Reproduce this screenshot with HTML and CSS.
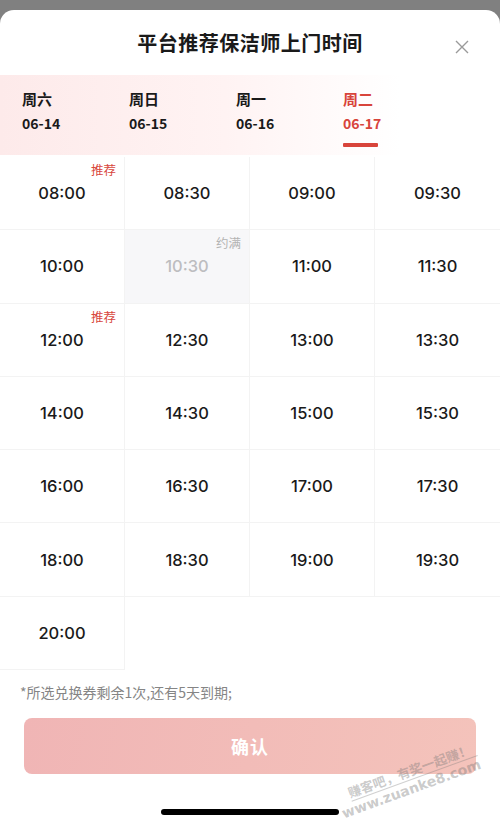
FILE: index.html
```html
<!DOCTYPE html>
<html>
  <head>
    <meta charset="utf-8" />
    <meta name="viewport" content="width=device-width, initial-scale=1" />
    <title>选择上门时间</title>
    <link rel="stylesheet" href="styles.css">
  </head>
  <body>
    <div class="sheet">
      <header class="sheet-header">
        <h1>平台推荐保洁师上门时间</h1>
        <svg class="close" width="14" height="14" viewBox="0 0 14 14">
          <path d="M1 1 L13 13 M13 1 L1 13" stroke="#9a9a9a" stroke-width="1.4" fill="none" />
        </svg>
      </header>

      <nav class="tabs">
        <div class="tab"><span class="week">周六</span><span class="date">06-14</span></div>
        <div class="tab"><span class="week">周日</span><span class="date">06-15</span></div>
        <div class="tab"><span class="week">周一</span><span class="date">06-16</span></div>
        <div class="tab active"><span class="week">周二</span><span class="date">06-17</span></div>
      </nav>

      <div class="slots">
        <div class="slot"><span class="tag">推荐</span>08:00</div>
        <div class="slot">08:30</div>
        <div class="slot">09:00</div>
        <div class="slot">09:30</div>
        <div class="slot">10:00</div>
        <div class="slot full"><span class="tag">约满</span>10:30</div>
        <div class="slot">11:00</div>
        <div class="slot">11:30</div>
        <div class="slot"><span class="tag">推荐</span>12:00</div>
        <div class="slot">12:30</div>
        <div class="slot">13:00</div>
        <div class="slot">13:30</div>
        <div class="slot">14:00</div>
        <div class="slot">14:30</div>
        <div class="slot">15:00</div>
        <div class="slot">15:30</div>
        <div class="slot">16:00</div>
        <div class="slot">16:30</div>
        <div class="slot">17:00</div>
        <div class="slot">17:30</div>
        <div class="slot">18:00</div>
        <div class="slot">18:30</div>
        <div class="slot">19:00</div>
        <div class="slot">19:30</div>
        <div class="slot">20:00</div>
      </div>

      <p class="note">*所选兑换券剩余1次,还有5天到期;</p>

      <div class="footer">
        <button class="confirm">确认</button>
        <div class="watermark">
          <span>赚客吧，有奖一起赚！</span>
          <span>www.zuanke8.com</span>
        </div>
      </div>

      <div class="home-bar"></div>
    </div>
  </body>
</html>
```

FILE: styles.css
```css
body {
  margin: 0;
  background-color: #808080;
  font-family: "Noto Sans CJK SC", "Noto Sans", sans-serif;
  color: #1a1a1a;
}

.sheet {
  margin-top: 10px;
  height: 815px;
  background-color: #ffffff;
  border-radius: 14px 14px 0 0;
  display: flex;
  flex-direction: column;
  position: relative;
  overflow: hidden;
}

.sheet-header {
  height: 65px;
  display: flex;
  align-items: center;
  justify-content: center;
  position: relative;
}

.sheet-header h1 {
  margin: 0;
  font-size: 20px;
  font-weight: 700;
  letter-spacing: 0.5px;
}

.close {
  position: absolute;
  right: 31px;
  top: 30px;
}

.tabs {
  height: 80px;
  display: flex;
  padding-left: 22px;
  background: linear-gradient(90deg, #fdeaea 0%, #fff3f3 45%, #ffffff 80%);
}

.tab {
  width: 107px;
  display: flex;
  flex-direction: column;
  padding-top: 13px;
  position: relative;
}

.tab .week {
  font-size: 15px;
  font-weight: 700;
  line-height: 22px;
}

.tab .date {
  font-size: 14px;
  font-weight: 700;
  line-height: 20px;
  margin-top: 3px;
}

.tab.active {
  color: #d8443b;
}

.tab.active::after {
  content: "";
  position: absolute;
  left: 0;
  top: 68px;
  width: 35px;
  height: 4px;
  background-color: #d8443b;
  border-radius: 1px;
}

.slots {
  margin-top: 2px;
  display: grid;
  grid-template-columns: repeat(4, 125px);
  grid-auto-rows: 73.3px;
}

.slot {
  display: flex;
  align-items: center;
  justify-content: center;
  font-family: Inter, "Noto Sans", sans-serif;
  font-size: 16.5px;
  font-weight: 500;
  color: #1a1a1a;
  border-right: 1px solid #f3f3f3;
  border-bottom: 1px solid #f3f3f3;
  position: relative;
  box-sizing: border-box;
}

.slot:nth-child(4n) {
  border-right: 0;
}

.slot .tag {
  position: absolute;
  top: 3px;
  right: 8px;
  font-family: "Noto Sans CJK SC", sans-serif;
  font-size: 12.5px;
  font-weight: 400;
  color: #d8473d;
}

.slot.full {
  background-color: #f7f7f9;
  color: #bdbdc0;
}

.slot.full .tag {
  color: #b3b3b3;
}

.note {
  margin: 12px 0 0 20px;
  font-size: 14px;
  color: #858585;
  line-height: 20px;
}

.footer {
  margin-top: 16px;
  padding: 0 24px;
  position: relative;
}

.confirm {
  width: 100%;
  height: 56px;
  border: 0;
  border-radius: 8px;
  background-image: linear-gradient(100deg, #f0b5b5, #f4c3bb);
  color: #ffffff;
  font-family: "Noto Sans CJK SC", sans-serif;
  font-size: 18px;
  font-weight: 700;
  letter-spacing: 1px;
}

.watermark {
  position: absolute;
  right: 28px;
  top: 22px;
  display: flex;
  flex-direction: column;
  align-items: flex-end;
  transform: rotate(-20deg);
  transform-origin: right top;
  color: rgba(120, 120, 120, 0.4);
  font-size: 13px;
  font-weight: 700;
  line-height: 16px;
  pointer-events: none;
}

.watermark span:first-child {
  border-bottom: 1px solid rgba(120, 120, 120, 0.35);
  padding-right: 4px;
}

.watermark span:last-child {
  font-family: "DejaVu Sans", sans-serif;
  font-size: 14px;
}

.home-bar {
  position: absolute;
  left: 161px;
  bottom: 10px;
  width: 178px;
  height: 6px;
  background-color: #000000;
  border-radius: 3px;
}
```
